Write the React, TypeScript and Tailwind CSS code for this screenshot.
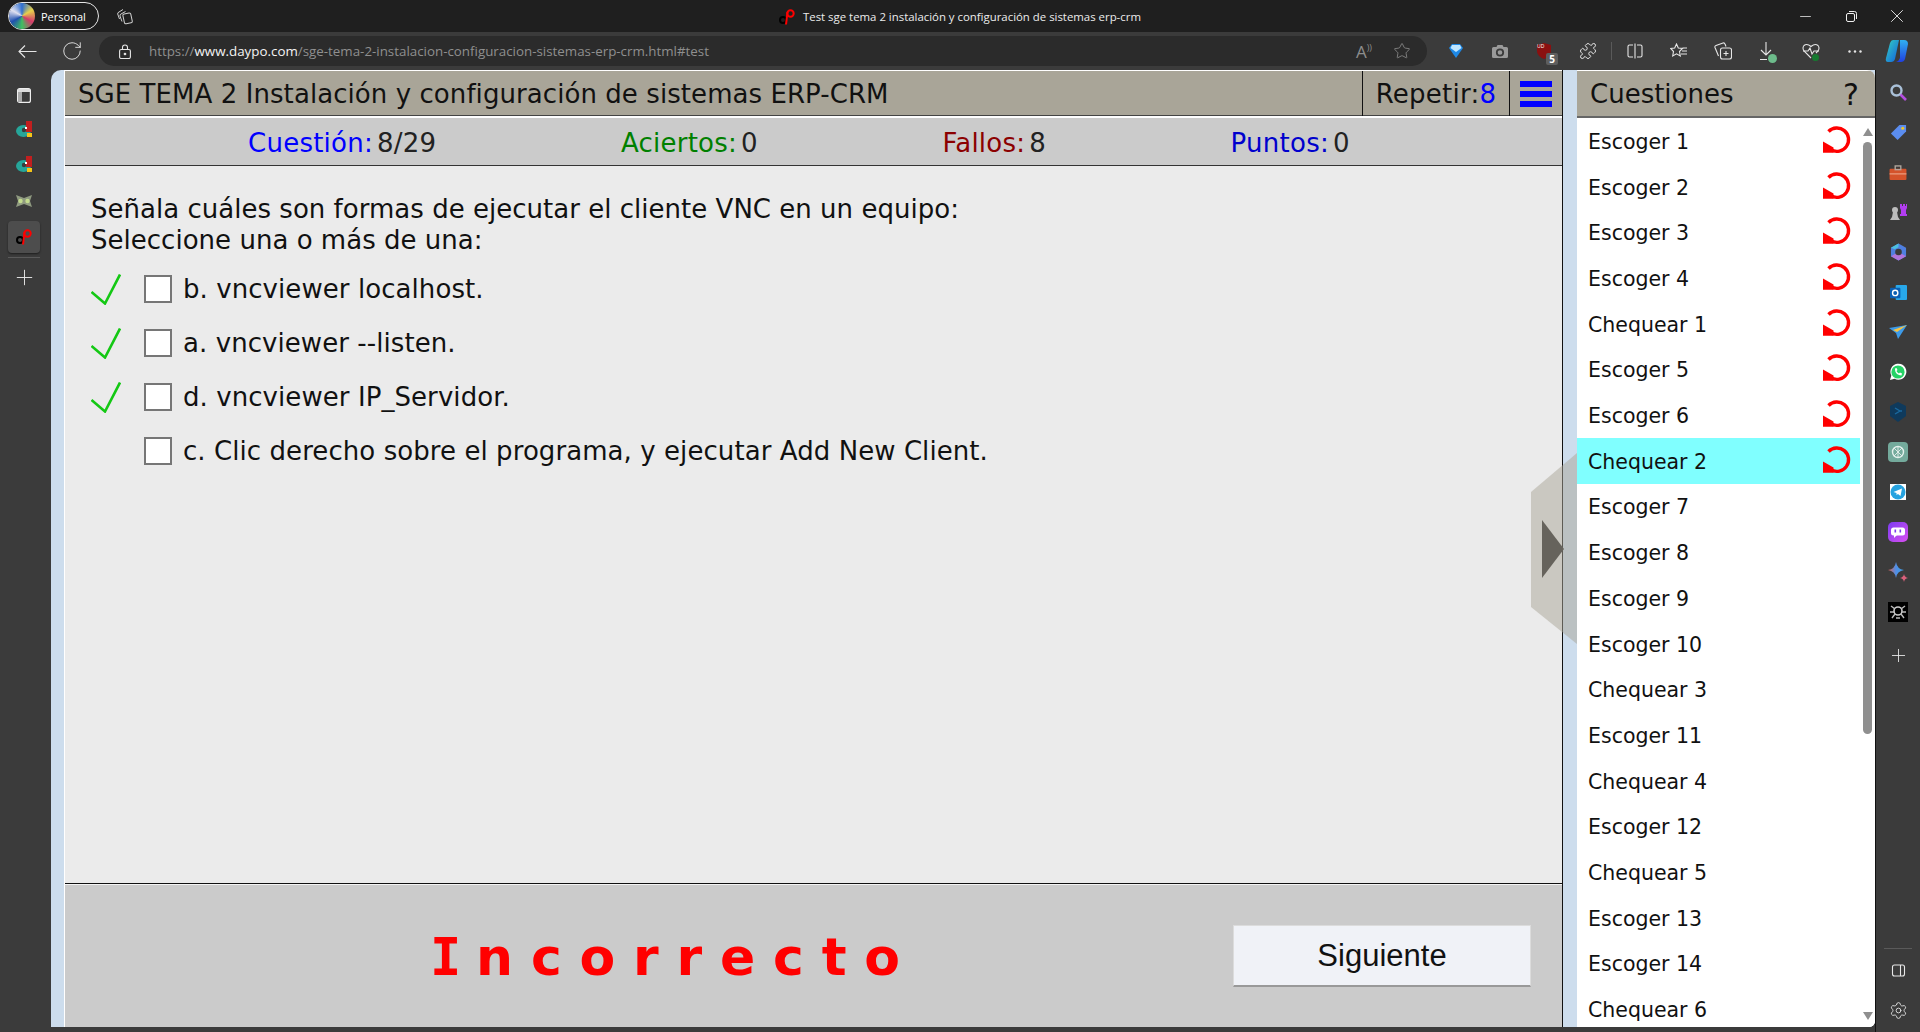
import { RotateCw, Star, Puzzle, Plus, Minus, X, Settings } from 'lucide-react';

const dejavu = 'font-["DejaVu_Sans",Verdana,sans-serif]';

const questions = [
  'Escoger 1', 'Escoger 2', 'Escoger 3', 'Escoger 4', 'Chequear 1', 'Escoger 5', 'Escoger 6', 'Chequear 2',
  'Escoger 7', 'Escoger 8', 'Escoger 9', 'Escoger 10', 'Chequear 3', 'Escoger 11', 'Chequear 4', 'Escoger 12',
  'Chequear 5', 'Escoger 13', 'Escoger 14', 'Chequear 6',
];

const options = [
  { text: 'b. vncviewer localhost.', ok: true },
  { text: 'a. vncviewer --listen.', ok: true },
  { text: 'd. vncviewer IP_Servidor.', ok: true },
  { text: 'c. Clic derecho sobre el programa, y ejecutar Add New Client.', ok: false },
];

function RepeatIcon() {
  return (
    <svg width="28" height="28" viewBox="0 0 28 28" fill="none" className="shrink-0 -mt-[2px]">
      <path d="M5.500 5.500 A11.700 11.700 0 1 1 8 23.800" stroke="#ff0000" strokeWidth="3.400" />
      <path d="M0 15.500 L0 26.800 L10.500 26.800 L10.500 21.500 Z" fill="#ff0000" />
    </svg>
  );
}

function Check() {
  return (
    <svg width="30" height="31" viewBox="0 0 30 31" fill="none" className="shrink-0">
      <path d="M0.500 18 L14 29.500 L29 0.500" stroke="#14c814" strokeWidth="2.600" />
    </svg>
  );
}

function DaypoLogo({ ring = '#000' }: { ring?: string }) {
  return (
    <svg width="16" height="16" viewBox="0 0 16 16" fill="none">
      <circle cx="4" cy="11" r="3" stroke={ring} strokeWidth="2" />
      <path d="M8.500 3 L7 15.500" stroke="#f00" strokeWidth="2" />
      <circle cx="11.500" cy="4.500" r="3.200" stroke="#f00" strokeWidth="2" />
    </svg>
  );
}

function EdgeShell() {
  return (
    <svg width="16" height="16" viewBox="0 0 16 16">
      <ellipse cx="7.500" cy="10" rx="7.500" ry="6" fill="#26a69a" />
      <circle cx="8" cy="9" r="2.200" fill="#3b3b3b" />
      <rect x="10" y="0" width="6" height="11" fill="#c21f1f" />
      <rect x="9" y="6" width="2" height="2" fill="#fff" />
      <rect x="11" y="12" width="5" height="4" fill="#f5c518" />
    </svg>
  );
}

function LeftRail() {
  return (
    <div className="w-[51px] shrink-0 flex flex-col items-center pt-[8px] pr-[3px] text-[#e8e8e8]">
      <div className="h-[34px] flex items-center justify-center">
        <svg width="14" height="15" viewBox="0 0 14 15" fill="none">
          <rect x="0.600" y="0.600" width="12.800" height="13.800" rx="2" stroke="#eee" strokeWidth="1.200" />
          <rect x="1" y="1" width="12" height="3" fill="#ddd" />
          <rect x="1" y="4" width="4" height="10" fill="#aaa" />
        </svg>
      </div>
      <div className="h-[34px] flex items-center justify-center"><EdgeShell /></div>
      <div className="h-[36px] flex items-center justify-center"><EdgeShell /></div>
      <div className="h-[37px] flex items-center justify-center">
        <svg width="16" height="14" viewBox="0 0 16 14">
          <path d="M0 1 L8 4 L16 1 L14 7 L16 13 L8 10 L0 13 L2 7 Z" fill="#8f9a80" />
          <circle cx="4.500" cy="7" r="2.200" fill="#c3dc8e" />
          <circle cx="11.500" cy="7" r="2.200" fill="#c3dc8e" />
        </svg>
      </div>
      <div className="mt-[2px] w-[32px] h-[32px] rounded-[4px] bg-[#4d4d4d] flex items-center justify-center shadow-[0_1px_2px_rgba(0,0,0,0.5)]">
        <DaypoLogo />
      </div>
      <div className="w-[32px] h-px bg-[#5a5a5a] mt-[4px]" />
      <Plus size={25} strokeWidth={0.9} className="mt-[7px]" />
    </div>
  );
}

function RightRail() {
  const cell = 'h-[40px] shrink-0 flex items-center justify-center';
  return (
    <div className="w-[45px] shrink-0 border-l border-[#111] flex flex-col items-center pt-[2px]">
      <div className={cell}>
        <svg width="17" height="17" viewBox="0 0 17 17" fill="none">
          <circle cx="6.500" cy="6.500" r="5" stroke="#a9c0d8" strokeWidth="2.400" />
          <path d="M10.500 10.500 L16 16" stroke="#b44fe0" strokeWidth="2.600" />
        </svg>
      </div>
      <div className={cell}>
        <svg width="17" height="17" viewBox="0 0 18 18"><path d="M1 10 L10 1 L17 1 L17 8 L8 17 Z" fill="#5b8def" /><circle cx="13.500" cy="4.500" r="1.600" fill="#f3c623" /></svg>
      </div>
      <div className={cell}>
        <svg width="18" height="15" viewBox="0 0 18 16"><rect x="0" y="4" width="18" height="12" rx="1" fill="#d4532b" /><rect x="6" y="1" width="6" height="4" fill="none" stroke="#b5a9a0" strokeWidth="1.400" /><rect x="0" y="9" width="18" height="1" fill="#f1b49a" /></svg>
      </div>
      <div className={cell}>
        <svg width="18" height="18" viewBox="0 0 18 18"><circle cx="6" cy="7" r="3" fill="#bdbdbd" /><path d="M1 17 L3 14 L4 9 L8 9 L9 14 L11 17 Z" fill="#bdbdbd" /><path d="M11 1 H13 V3 H14 V1 H16 V3 H17 V1 H18 V5 L17 7 V11 H18 V13 H11 V11 H12 V7 L11 5 Z" fill="#b23df0" /></svg>
      </div>
      <div className={cell}>
        <svg width="17" height="20" viewBox="0 0 18 20"><path d="M9 1 L17 5.500 L17 14.500 L9 19 L1 14.500 L1 5.500 Z" fill="#4f7fe0" /><path d="M1 14.500 L9 10 L17 14.500 L9 19 Z" fill="#b075dc" /><path d="M1 5.500 L9 1 L9 5 L5 7 Z" fill="#4cc0e0" /><circle cx="9" cy="10" r="3.500" fill="#3b3b3b" /></svg>
      </div>
      <div className={cell}>
        <svg width="17" height="17" viewBox="0 0 18 18"><rect x="6" y="1" width="12" height="16" rx="1" fill="#28a8ea" /><rect x="0" y="4" width="11" height="11" rx="1" fill="#0a5fb4" /><circle cx="5.500" cy="9.500" r="2.800" fill="none" stroke="#fff" strokeWidth="1.500" /></svg>
      </div>
      <div className={cell}>
        <svg width="18" height="14" viewBox="0 0 18 14"><path d="M0 3 L18 0 L9 14 L7 8 Z" fill="#3d9be9" /><path d="M4 5 L18 0 L8 7 Z" fill="#f6c344" /></svg>
      </div>
      <div className={cell}>
        <svg width="18" height="18" viewBox="0 0 18 18"><path d="M1 17 L2.300 12.500 A8 8 0 1 1 5.600 15.800 Z" fill="#fff" /><circle cx="9" cy="9" r="6.600" fill="#25d366" /><path d="M6 5.500 C6 10 8 12 12.500 12.500 L13 10.500 L11 9.500 L10 10.500 C9 10 8 9 7.500 8 L8.500 7 L7.500 5 Z" fill="#fff" /></svg>
      </div>
      <div className={cell}>
        <svg width="16" height="20" viewBox="0 0 16 20"><path d="M8 0 L16 4 L16 14 L8 20 L0 14 L0 4 Z" fill="#0f3a5c" /><path d="M5 6 L10 9 L5 12 M9 9 H12" stroke="#1a6aa0" strokeWidth="1.400" fill="none" /></svg>
      </div>
      <div className={cell}>
        <svg width="20" height="20" viewBox="0 0 20 20"><rect width="20" height="20" rx="4" fill="#74aa9c" /><circle cx="10" cy="10" r="5.500" fill="none" stroke="#e4f0ec" strokeWidth="1.400" /><path d="M6 6 L14 14 M14 6 L6 14 M10 4 V16" stroke="#e4f0ec" strokeWidth="0.900" /></svg>
      </div>
      <div className={cell}>
        <svg width="16" height="16" viewBox="0 0 16 16"><rect width="16" height="16" fill="#fff" /><circle cx="8" cy="8" r="7.500" fill="#27a3e0" /><path d="M3.500 8 L12 4.500 L10.500 12 L8 10 L6.500 11 L6.500 9 Z" fill="#fff" /></svg>
      </div>
      <div className={cell}>
        <svg width="20" height="20" viewBox="0 0 20 20"><defs><linearGradient id="bot" x1="0" y1="0" x2="1" y2="1"><stop offset="0" stopColor="#7c3cf0" /><stop offset="1" stopColor="#d84ff0" /></linearGradient></defs><rect width="20" height="20" rx="5" fill="url(#bot)" /><rect x="3" y="5.500" width="14" height="8" rx="2.500" fill="#fff" /><path d="M6 13 L6 16 L9 13 Z" fill="#fff" /><rect x="6.500" y="7.500" width="1.600" height="3" fill="#7c3cf0" /><rect x="11.500" y="7.500" width="1.600" height="3" fill="#7c3cf0" /></svg>
      </div>
      <div className={cell}>
        <svg width="20" height="20" viewBox="0 0 20 20"><defs><linearGradient id="gem" x1="0" y1="0" x2="1" y2="0"><stop offset="0" stopColor="#e0604f" /><stop offset="0.500" stopColor="#4f8fe8" /><stop offset="1" stopColor="#3f9fe0" /></linearGradient></defs><path d="M8 0 Q9 7 16 8 Q9 9 8 16 Q7 9 0 8 Q7 7 8 0 Z" fill="url(#gem)" /><path d="M16 12 Q16.500 15 20 16 Q16.500 16.500 16 20 Q15.500 16.500 12 16 Q15.500 15 16 12 Z" fill="#d9607a" /></svg>
      </div>
      <div className={cell}>
        <svg width="20" height="20" viewBox="0 0 20 20"><rect width="20" height="20" fill="#000" /><circle cx="10" cy="9" r="4" fill="none" stroke="#ccc" strokeWidth="1.600" /><path d="M3 4 L7 7 M17 4 L13 7 M2 10 H6 M14 10 H18 M4 16 L7 12 M16 16 L13 12 M8 16 H12" stroke="#bbb" strokeWidth="1.400" /></svg>
      </div>
      <div className="h-[47px] shrink-0 flex items-center justify-center"><Plus size={21} strokeWidth={1} className="text-[#e8e8e8]" /></div>
      <div className="flex-1" />
      <div className="w-[28px] h-px bg-[#5a5a5a] mb-[14px]" />
      <svg width="15" height="15" viewBox="0 0 15 15" fill="none" stroke="#e8e8e8" strokeWidth="1.100" className="mb-[23px]">
        <rect x="1.500" y="2" width="12" height="11" rx="2" />
        <path d="M9.500 2 V13" />
      </svg>
      <Settings size={19} strokeWidth={1.100} className="text-[#e8e8e8] mb-[12px]" />
    </div>
  );
}

function TitleBar() {
  return (
    <div className="h-[32px] bg-[#1f1f1f] flex items-center text-white relative shrink-0">
      <div className="ml-[8px] h-[28px] w-[91px] rounded-full border border-[#e6e6e6] flex items-center">
        <div className="w-[26px] h-[26px] rounded-full bg-[conic-gradient(#2f6fd0,#e8d24a,#d43a6a,#40c060,#2050b0,#e0e0f0,#2f6fd0)]" />
        <span className="ml-[6px] text-[11px] font-['Open_Sans',sans-serif] leading-none">Personal</span>
      </div>
      <svg width="17" height="17" viewBox="0 0 17 17" fill="none" stroke="#d0d0d0" strokeWidth="1" className="ml-[17px]">
        <rect x="7.500" y="5.500" width="8" height="10" rx="1.500" transform="rotate(-12 11 10)" />
        <path d="M6 13.500 L4 8 Q3.700 6.500 5 6 L9.500 3.500 M3.500 11 L1.700 6 Q1.500 4.500 3 4 L7 1.500" />
      </svg>
      <div className="absolute left-[779px] top-[8px] flex items-center gap-[8px]">
        <DaypoLogo />
        <span className="text-[11.400px] text-[#ececec] font-['Open_Sans',sans-serif]">Test sge tema 2 instalación y configuración de sistemas erp-crm</span>
      </div>
      <div className="ml-auto flex items-center">
        <div className="w-[46px] flex justify-center"><Minus size={17} strokeWidth={1} /></div>
        <div className="w-[46px] flex justify-center">
          <svg width="11" height="11" viewBox="0 0 11 11" fill="none" stroke="#f0f0f0" strokeWidth="1">
            <rect x="0.500" y="2.500" width="8" height="8" rx="1.500" />
            <path d="M3 0.500 H8.500 Q10.500 0.500 10.500 2.500 V8" />
          </svg>
        </div>
        <div className="w-[46px] flex justify-center"><X size={22} strokeWidth={0.900} /></div>
      </div>
    </div>
  );
}

function Toolbar() {
  const slot = 'w-[44px] h-[24px] flex justify-center items-center text-[#e6e6e6] relative';
  return (
    <div className="h-[38px] bg-[#3b3b3b] flex items-center shrink-0">
      <svg width="19" height="13" viewBox="0 0 19 13" fill="none" stroke="#e6e6e6" strokeWidth="1.100" className="ml-[18px]">
        <path d="M1 6.500 H18.500 M7 0.500 L1 6.500 L7 12.500" />
      </svg>
      <RotateCw size={22} strokeWidth={1} className="ml-[24px] text-[#e6e6e6]" />
      <div className="ml-[16px] w-[1328px] h-[30px] rounded-full bg-[#2b2b2b] flex items-center">
        <svg width="12" height="15" viewBox="0 0 12 15" fill="none" stroke="#e6e6e6" strokeWidth="1.100" className="ml-[20px]">
          <rect x="0.600" y="5.500" width="10.800" height="9" rx="1.500" />
          <path d="M3.500 5.500 V3.500 A2.500 2.500 0 0 1 8.500 3.500 V5.500" />
          <circle cx="6" cy="10" r="0.800" fill="#e6e6e6" />
        </svg>
        <span className="ml-[18px] text-[13.350px] font-['Open_Sans',sans-serif] text-[#8f8f8f]">
          https://<span className="text-[#f4f4f4]">www.daypo.com</span>/sge-tema-2-instalacion-configuracion-sistemas-erp-crm.html#test
        </span>
        <div className="ml-auto flex items-center text-[#8d8d8d]">
          <span className="text-[17px] leading-none font-['Open_Sans',sans-serif] mr-[21px]">A<span className="text-[9px] align-top">))</span></span>
          <Star size={18} strokeWidth={1.100} className="mr-[16px]" />
        </div>
      </div>
      <div className="ml-[7px] flex items-center">
        <div className={slot}>
          <svg width="14" height="16" viewBox="0 0 14 16"><path d="M3 1 H11 L14 5 L7 15 L0 5 Z" fill="#1e88e5" /><path d="M3 2 H11 L12.500 5 L7 9 L1.500 5 Z" fill="#bfe6ff" /></svg>
        </div>
        <div className={slot}>
          <svg width="16" height="13" viewBox="0 0 16 13"><path d="M1.500 2 H4.500 L5.500 0 H10.500 L11.500 2 H14.500 Q16 2 16 3.500 V11.500 Q16 13 14.500 13 H1.500 Q0 13 0 11.500 V3.500 Q0 2 1.500 2 Z" fill="#9a9a9a" /><circle cx="8" cy="7.500" r="3.200" fill="none" stroke="#3b3b3b" strokeWidth="1.800" /></svg>
        </div>
        <div className={slot}>
          <svg width="14" height="16" viewBox="0 0 14 16"><path d="M0 2 L7 0 L14 2 V8 C14 12 10 15 7 16 C4 15 0 12 0 8 Z" fill="#8a1010" /></svg>
          <span className="absolute left-[15px] top-[3px] text-white text-[5px] leading-[8px] font-['Open_Sans',sans-serif]">UD</span>
          <span className="absolute left-[24px] top-[14px] w-[12px] h-[12px] rounded-[2px] bg-[#5e5e5e] text-white text-[10px] leading-[12px] text-center font-bold font-['Open_Sans',sans-serif]">5</span>
        </div>
        <div className={slot}><Puzzle size={18} strokeWidth={1.300} /></div>
        <div className="w-px h-[18px] bg-[#5a5a5a] mx-[1px]" />
        <div className={slot}>
          <svg width="16" height="16" viewBox="0 0 16 16" fill="none" stroke="#e6e6e6" strokeWidth="1.100"><path d="M6 2 H2.500 Q1 2 1 3.500 V12.500 Q1 14 2.500 14 H6 M10 2 H13.500 Q15 2 15 3.500 V12.500 Q15 14 13.500 14 H10 M8 0.500 V15.500" /></svg>
        </div>
        <div className={slot}>
          <svg width="18" height="16" viewBox="0 0 18 16" fill="none" stroke="#e6e6e6" strokeWidth="1.100"><path d="M6.500 1 L8.300 5 L12.500 5.500 L9.500 8.500 L10.300 13 L6.500 10.800 L2.700 13 L3.500 8.500 L0.700 5.500 L4.700 5 Z" /><path d="M12 8 H17 M11 11 H17 M12.500 5 H17" /></svg>
        </div>
        <div className={slot}>
          <svg width="18" height="18" viewBox="0 0 18 18" fill="none" stroke="#e6e6e6" strokeWidth="1.100"><rect x="6.500" y="6" width="11" height="11" rx="2" /><path d="M12 9 V14 M9.500 11.500 H14.500" /><path d="M4.500 14 L1 5.500 Q0.500 4 2 3.500 L9 1 Q10.500 0.500 11 2 L12 4.500" /></svg>
        </div>
        <div className={slot}>
          <svg width="14" height="19" viewBox="0 0 14 19" fill="none" stroke="#e6e6e6" strokeWidth="1.100"><path d="M6 0 V13 M1 8 L6 13 L11 8 M0 17.500 H7" /></svg>
          <span className="absolute left-[23px] top-[15px] w-[9px] h-[9px] rounded-full bg-[#6dbb8b]" />
        </div>
        <div className={slot}>
          <svg width="18" height="16" viewBox="0 0 18 16" fill="none" stroke="#e6e6e6" strokeWidth="1.100"><path d="M9 15 L2 8 Q0 5 2 2.500 Q5 0 9 3.500 Q13 0 16 2.500 Q18 5 16 8 L14 10" /><path d="M1 8 H6 L8 5 L10 11 L12 8 H17" /></svg>
          <span className="absolute left-[23px] top-[15px] w-[7px] h-[7px] rounded-full bg-[#167a30]" />
        </div>
        <div className={slot}>
          <svg width="14" height="3" viewBox="0 0 14 3" fill="#e6e6e6"><circle cx="1.500" cy="1.500" r="1.200" /><circle cx="7" cy="1.500" r="1.200" /><circle cx="12.500" cy="1.500" r="1.200" /></svg>
        </div>
        <div className="w-[39px] flex justify-center">
          <svg width="24" height="24" viewBox="0 0 24 24">
            <defs>
              <linearGradient id="cop" x1="0" y1="0" x2="1" y2="1"><stop offset="0" stopColor="#35d0c0" /><stop offset="1" stopColor="#1060e0" /></linearGradient>
              <linearGradient id="cop2" x1="0" y1="0" x2="0" y2="1"><stop offset="0" stopColor="#30b0f0" /><stop offset="1" stopColor="#2040e0" /></linearGradient>
            </defs>
            <path d="M8 1 H14 L10 20 Q9 23 6 23 H3 Q0 23 1 19 L5 4 Q6 1 8 1 Z" fill="url(#cop)" />
            <path d="M15 1 H19 Q23 1 23 5 L20 20 Q19 23 16 23 H11 Q14 22 15 19 Z" fill="url(#cop2)" />
          </svg>
        </div>
      </div>
    </div>
  );
}

function Stat({ label, value, color }: { label: string; value: string; color: string }) {
  return (
    <div className="flex gap-[4px]">
      <span className={color}>{label}</span>
      <span className="text-[#222]">{value}</span>
    </div>
  );
}

function QuizPanel() {
  return (
    <div className="w-[1499px] shrink-0 flex flex-col border-l border-white border-r-[1px] border-r-[#111] bg-[#ebebeb]">
      <div className="h-[48px] shrink-0 bg-[#a9a598] border-t border-t-white border-b-2 border-b-white flex items-stretch shadow-[inset_0_-1px_0_#444]">
        <div className="flex-1 pl-[13px] text-[26px] tracking-[0.070px] leading-[46px] text-[#111]">SGE TEMA 2 Instalación y configuración de sistemas ERP-CRM</div>
        <div className="w-[147px] border-l border-[#111] flex items-center justify-center pt-[2px] text-[26px] tracking-[0.250px] text-[#111]">
          Repetir:<span className="text-[#0000ff]">8</span>
        </div>
        <div className="w-[53px] border-l border-[#111] flex flex-col items-center justify-center gap-[4px]">
          <div className="w-[32px] h-[6px] bg-[#0000ff]" />
          <div className="w-[32px] h-[6px] bg-[#0000ff]" />
          <div className="w-[32px] h-[6px] bg-[#0000ff]" />
        </div>
      </div>
      <div className="h-[48px] shrink-0 bg-[#cbcbcb] border-b border-b-[#333] flex items-center pl-[183px] pt-[3px] gap-[184.500px] text-[26px] tracking-[0.250px]">
        <Stat label="Cuestión:" value="8/29" color="text-[#0000ff]" />
        <Stat label="Aciertos:" value="0" color="text-[#008000]" />
        <Stat label="Fallos:" value="8" color="text-[#8b0000]" />
        <Stat label="Puntos:" value="0" color="text-[#0000cd]" />
      </div>
      <div className="flex-1 pl-[26px] pt-[28px] text-[#111] text-[26px] leading-[31px]">
        <div className="tracking-[0.020px]">Señala cuáles son formas de ejecutar el cliente VNC en un equipo:</div>
        <div className="tracking-[0.020px]">Seleccione una o más de una:</div>
        <div className="mt-[6px] flex flex-col tracking-[0.070px]">
          {options.map((o) => (
            <div key={o.text} className="h-[54px] flex items-center">
              <div className="w-[53px] shrink-0">{o.ok && <Check />}</div>
              <div className="w-[28px] h-[28px] shrink-0 bg-white border-2 border-[#767676]" />
              <span className="ml-[11px]">{o.text}</span>
            </div>
          ))}
        </div>
      </div>
      <div className="h-[144px] shrink-0 bg-[#cbcbcb] border-t border-t-[#111] shadow-[inset_0_1px_0_#f4f4f4] flex items-center relative">
        <div className="ml-[365px] mt-[3px] text-[#ff0000] font-bold text-[52px] tracking-[17.800px] leading-none">
          <span className="font-['DejaVu_Sans_Mono',monospace] -mr-[3px]">I</span>ncorrecto
        </div>
        <button className="absolute right-[31px] top-[41px] w-[298px] h-[62px] pt-[2px] bg-[#f0f2f7] border border-[#dcdcdc] border-b-2 border-b-[#999] text-[31px] text-[#111] font-['Liberation_Sans',sans-serif]">
          Siguiente
        </button>
      </div>
    </div>
  );
}

function QuestionList() {
  return (
    <div className="flex-1 min-w-0 flex flex-col rounded-tr-[8px] rounded-br-[6px] overflow-hidden bg-white">
      <div className="h-[48px] shrink-0 bg-[#a9a598] border-t border-t-white border-b-2 border-b-[#666] flex items-center justify-between pt-[2px] px-[13px] text-[26px] text-[#111]">
        <span>Cuestiones</span>
        <span className="text-[30px] mr-[3px]">?</span>
      </div>
      <div className="flex-1 min-h-0 flex overflow-hidden">
        <div className="flex-1 min-w-0">
          {questions.map((q, i) => (
            <div
              key={q}
              className={`h-[45.700px] flex items-center justify-between pl-[11px] pr-[9px] text-[20.500px] text-[#111] ${i === 7 ? 'bg-[#80ffff]' : ''}`}
            >
              <span className="pt-[3px]">{q}</span>
              {i < 8 && <RepeatIcon />}
            </div>
          ))}
        </div>
        <div className="w-[15px] shrink-0 relative bg-white">
          <div className="absolute left-[3px] top-[10px] w-0 h-0 border-x-[5px] border-x-transparent border-b-[8px] border-b-[#8f8f8f]" />
          <div className="absolute left-[3px] top-[24px] w-[9px] h-[592px] rounded-full bg-[#8f8f8f]" />
          <div className="absolute left-[3px] bottom-[7px] w-0 h-0 border-x-[5px] border-x-transparent border-t-[8px] border-t-[#8f8f8f]" />
        </div>
      </div>
    </div>
  );
}

export default function App() {
  return (
    <div className={`w-[1920px] h-[1032px] overflow-hidden flex flex-col bg-[#3b3b3b] ${dejavu}`}>
      <TitleBar />
      <Toolbar />
      <div className="flex-1 min-h-0 flex">
        <LeftRail />
        <div className="flex-1 min-w-0 flex pb-[5px]">
          <div className="flex-1 min-w-0 flex bg-[#cddded] rounded-tl-[10px] rounded-br-[6px] pl-[13px] relative">
            <QuizPanel />
            <div className="w-[14px] shrink-0" />
            <QuestionList />
            <div className="absolute left-[1480px] top-[383px] w-[46px] h-[191px] bg-[#a9a598]/50 [clip-path:polygon(0_39px,46px_0,46px_191px,0_154px)] flex items-center justify-center">
              <div className="w-0 h-0 border-y-[29px] border-y-transparent border-l-[22px] border-l-[#66635c] -ml-[2px]" />
            </div>
          </div>
        </div>
        <RightRail />
      </div>
    </div>
  );
}
